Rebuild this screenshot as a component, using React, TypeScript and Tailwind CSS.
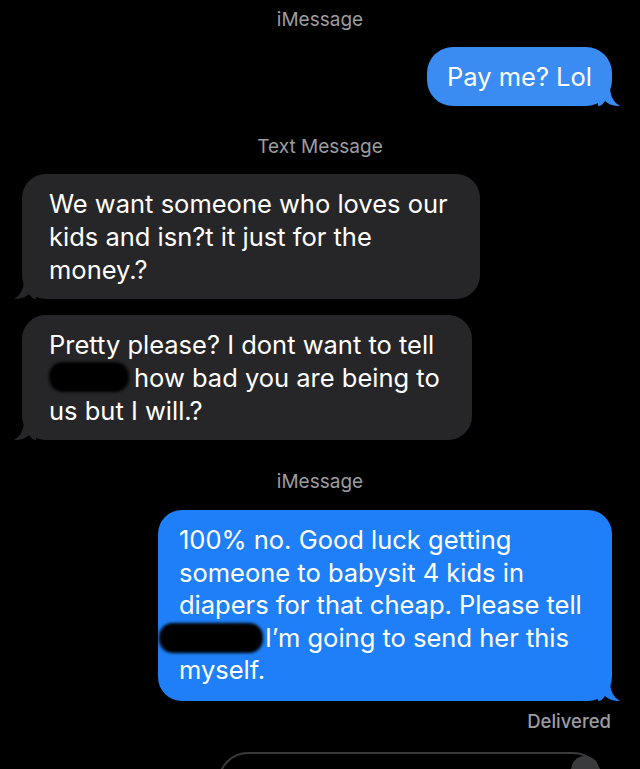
const font = { fontFamily: "Inter, 'Noto Sans', sans-serif" };

const Tail = ({ side, color }: { side: "left" | "right"; color: string }) => (
  <svg
    width="22"
    height="20"
    viewBox="0 0 22 20"
    className={
      side === "right"
        ? "absolute -right-[8px] bottom-0"
        : "absolute -left-[8px] bottom-0 -scale-x-100"
    }
  >
    <path
      d="M0 0 H12 C12 9 15 16 22 20 C15 20 10 18 7 15 C5 18 3 20 0 20 Z"
      fill={color}
    />
  </svg>
);

const Blob = ({ w, className }: { w: string; className?: string }) => (
  <span
    className={`inline-block h-[30px] align-middle rounded-[14px] bg-black blur-[1.5px] ${w} ${className ?? ""}`}
  ></span>
);

const App = () => {
  return (
    <div
      className="bg-black w-[640px] h-[769px] overflow-hidden flex flex-col text-white antialiased"
      style={font}
    >
      <div className="mt-[8px] text-center text-[19px] text-[#9c9ca1] leading-[24px]">
        iMessage
      </div>

      <div className="mt-[15px] flex justify-end pr-[28px]">
        <div className="relative bg-[#3a8cf2] rounded-[26px] px-[20px] py-[12px] text-[25.5px] leading-[35px]">
          Pay me? Lol
          <Tail side="right" color="#3a8cf2" />
        </div>
      </div>

      <div className="mt-[29px] text-center text-[19px] text-[#9c9ca1] leading-[24px]">
        Text Message
      </div>

      <div className="mt-[15px] pl-[22px] flex flex-col gap-[16px]">
        <div className="relative w-[458px] bg-[#262629] rounded-[24px] pl-[27px] pr-[10px] py-[13px] text-[25.5px] leading-[33px]">
          We want someone who loves our
          <br />
          kids and isn?t it just for the
          <br />
          money.?
          <Tail side="left" color="#262629" />
        </div>
        <div className="relative w-[450px] bg-[#262629] rounded-[24px] pl-[27px] pr-[10px] py-[13px] text-[25.5px] leading-[33px]">
          Pretty please? I dont want to tell
          <br />
          <Blob w="w-[80px]" className="mr-[5px] -mt-[6px]" />
          how bad you are being to
          <br />
          us but I will.?
          <Tail side="left" color="#262629" />
        </div>
      </div>

      <div className="mt-[30px] text-center text-[19px] text-[#9c9ca1] leading-[24px]">
        iMessage
      </div>

      <div className="mt-[16px] flex justify-end pr-[28px]">
        <div className="relative w-[454px] bg-[#1f7ff8] rounded-[24px] pl-[21px] pr-[8px] py-[14px] text-[25.5px] leading-[32.5px]">
          100% no. Good luck getting
          <br />
          someone to babysit 4 kids in
          <br />
          diapers for that cheap. Please tell
          <br />
          <Blob w="w-[104px]" className="-ml-[20px] mr-[2px] -mt-[4px]" />
          I’m going to send her this
          <br />
          myself.
          <Tail side="right" color="#1f7ff8" />
        </div>
      </div>

      <div className="mt-[8px] pr-[29px] text-right text-[18.5px] font-medium text-[#9c9ca1] leading-[24px]">
        Delivered
      </div>

      <div className="mt-[19px] ml-[218px] w-[385px] h-[60px] shrink-0 rounded-[30px] border-2 border-[#3a3a3c] flex justify-end pr-[2px] pt-[2px]">
        <div className="w-[28px] h-[28px] rounded-full bg-[#3a3a3c]"></div>
      </div>
    </div>
  );
};

export default App;
